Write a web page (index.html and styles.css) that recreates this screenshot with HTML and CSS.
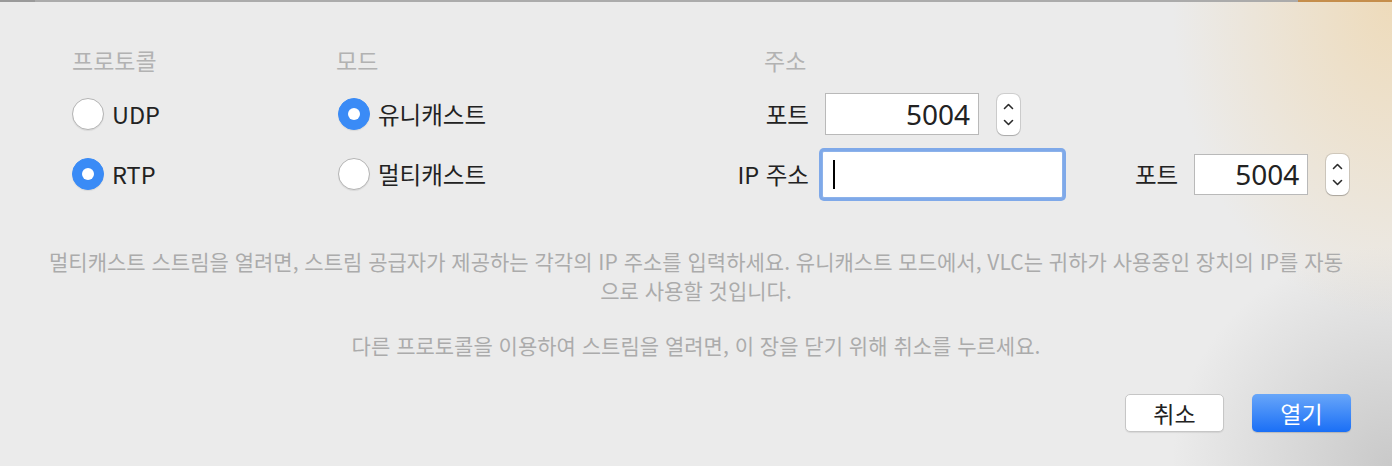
FILE: index.html
```html
<!DOCTYPE html>
<html lang="ko">
<head>
<meta charset="utf-8">
<link rel="stylesheet" href="styles.css">
</head>
<body>
<div class="dialog">
  <div class="topbar"><span class="tb-left"></span><span class="tb-mid"></span><span class="tb-right"></span></div>
  <div class="form">
    <div class="col col-proto">
      <div class="head">프로토콜</div>
      <div class="row"><span class="radio"></span><span class="label">UDP</span></div>
      <div class="row"><span class="radio on"></span><span class="label">RTP</span></div>
    </div>
    <div class="col col-mode">
      <div class="head">모드</div>
      <div class="row"><span class="radio on"></span><span class="label">유니캐스트</span></div>
      <div class="row"><span class="radio"></span><span class="label">멀티캐스트</span></div>
    </div>
    <div class="col col-addr">
      <div class="head head-addr">주소</div>
      <div class="row">
        <span class="flabel">포트</span>
        <span class="field port">5004</span>
        <span class="stepper"><svg width="23" height="41" viewBox="0 0 23 41"><path d="M7.5 14.5 L11.5 10.5 L15.5 14.5 M7.5 26.5 L11.5 30.5 L15.5 26.5" fill="none" stroke="#2a2a2a" stroke-width="1.6" stroke-linecap="round" stroke-linejoin="round"/></svg></span>
      </div>
      <div class="row">
        <span class="flabel">IP 주소</span>
        <span class="field ip focus"><span class="caret"></span></span>
        <span class="flabel flabel2">포트</span>
        <span class="field port2">5004</span>
        <span class="stepper"><svg width="23" height="41" viewBox="0 0 23 41"><path d="M7.5 14.5 L11.5 10.5 L15.5 14.5 M7.5 26.5 L11.5 30.5 L15.5 26.5" fill="none" stroke="#2a2a2a" stroke-width="1.6" stroke-linecap="round" stroke-linejoin="round"/></svg></span>
      </div>
    </div>
  </div>
  <p class="desc">멀티캐스트 스트림을 열려면, 스트림 공급자가 제공하는 각각의 IP 주소를 입력하세요. 유니캐스트 모드에서, VLC는 귀하가 사용중인 장치의 IP를 자동<br>으로 사용할 것입니다.</p>
  <p class="desc desc2">다른 프로토콜을 이용하여 스트림을 열려면, 이 장을 닫기 위해 취소를 누르세요.</p>
  <div class="buttons">
    <button class="btn">취소</button>
    <button class="btn primary">열기</button>
  </div>
</div>
</body>
</html>
```
FILE: styles.css
```css
* { box-sizing: border-box; }
html, body { margin: 0; padding: 0; }
body {
  width: 1392px;
  height: 466px;
  overflow: hidden;
  font-family: "Noto Sans CJK KR", "Noto Sans", sans-serif;
}
.dialog {
  width: 1392px;
  height: 466px;
  background:
    radial-gradient(ellipse 220px 320px at 100% 0%, rgba(238, 218, 184, 0.95), rgba(238, 218, 184, 0)),
    radial-gradient(ellipse 220px 220px at 100% 100%, rgba(195, 195, 195, 0.85), rgba(195, 195, 195, 0)),
    #ebebeb;
  display: flex;
  flex-direction: column;
}
.topbar { height: 2px; display: flex; flex: none; }
.tb-left { width: 35px; background: #9a9a9a; }
.tb-mid { flex: 1; background: #ababab; }
.tb-right { width: 94px; background: #c58e4c; }

.form {
  display: flex;
  padding-left: 72px;
  margin-top: 44px;
  height: 198px;
  flex: none;
}
.col { display: flex; flex-direction: column; }
.col-proto { width: 264px; }
.col-mode { width: 399px; }
.head {
  font-size: 23px;
  line-height: 28px;
  height: 28px;
  color: #b2b2b2;
  margin-bottom: 19px;
}
.col-mode .row { margin-left: 2px; }
.head-addr { margin-left: 29px; }
.row {
  display: flex;
  align-items: center;
  height: 42px;
  margin-bottom: 18px;
}
.radio {
  width: 32px;
  height: 32px;
  border-radius: 50%;
  background: #fff;
  border: 1px solid #b4b4b4;
  box-shadow: 0 1px 1px rgba(0,0,0,0.08);
  position: relative;
  flex: none;
}
.radio.on {
  background: #3a8bf6;
  border-color: #3a8bf6;
}
.radio.on::after {
  content: "";
  position: absolute;
  left: 50%;
  top: 50%;
  width: 12px;
  height: 12px;
  margin: -6px 0 0 -6px;
  border-radius: 50%;
  background: #fff;
}
.label {
  margin-left: 8px;
  font-size: 23.5px;
  color: #222;
}
.flabel {
  width: 74px;
  text-align: right;
  font-size: 23.5px;
  color: #222;
  flex: none;
  white-space: nowrap;
}
.field {
  height: 42px;
  background: #fff;
  border: 1px solid #b9b9b9;
  font-family: "Noto Sans", sans-serif;
  font-size: 28px;
  color: #222;
  display: flex;
  align-items: center;
  justify-content: flex-end;
  padding-right: 8px;
  flex: none;
}
.port { width: 154px; margin-left: 16px; }
.ip {
  width: 241px;
  height: 47px;
  margin-left: 13px;
  justify-content: flex-start;
  padding-left: 10px;
  border-color: #8cb2ea;
  box-shadow: 0 0 0 3px #7fa9e9;
  border-radius: 2px;
}
.caret { width: 2px; height: 29px; background: #000; }
.flabel2 { width: auto; margin-left: 72px; }
.port2 { width: 114px; height: 41px; margin-left: 16px; }
.stepper {
  width: 23px;
  height: 41px;
  margin-left: 18px;
  background: #fff;
  border-radius: 7px;
  box-shadow: 0 0 0 1px rgba(0,0,0,0.12), 0 1px 1px rgba(0,0,0,0.18);
  display: flex;
  flex: none;
}

.desc {
  margin: 0;
  text-align: center;
  font-size: 21px;
  line-height: 29px;
  color: #ababab;
  padding-top: 3px;
}
.desc2 { margin-top: 26px; padding-top: 0; }
.buttons {
  display: flex;
  justify-content: flex-end;
  gap: 28px;
  padding-right: 41px;
  margin-top: 34px;
}
.btn {
  width: 99px;
  height: 38px;
  border-radius: 5px;
  border: 1px solid #c6c6c6;
  background: #fff;
  font-family: "Noto Sans CJK KR", sans-serif;
  font-size: 23px;
  line-height: 1;
  color: #222;
  box-shadow: 0 1px 1px rgba(0,0,0,0.08);
  padding: 0;
}
.btn.primary {
  border: none;
  color: #fff;
  background: linear-gradient(#68a6f9, #1a6ff6);
  box-shadow: 0 1px 1px rgba(0,0,0,0.15);
}
```
